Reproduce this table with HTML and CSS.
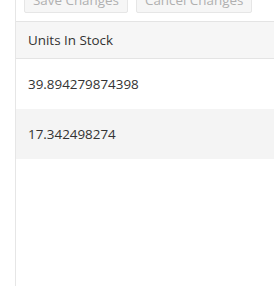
FILE: index.html
```html
<!DOCTYPE html>
<html>
<head>
    <title>Products</title>
    <link rel="stylesheet" href="styles.css">
</head>
<body>
    <div class="grid">
        <div class="grid-toolbar">
            <button class="grid-button" disabled>Save Changes</button>
            <button class="grid-button" disabled>Cancel Changes</button>
        </div>
        <div class="grid-header">
            <div class="header-cell">Units In Stock</div>
        </div>
        <div class="grid-content">
            <div class="grid-row">
                <div class="cell">39.894279874398</div>
            </div>
            <div class="grid-row alt">
                <div class="cell">17.342498274</div>
            </div>
        </div>
    </div>
</body>
</html>
```

FILE: styles.css
```css
body {
    margin: 0;
    padding: 0 0 0 15px;
    background-color: #fff;
    color: #424242;
    font-family: "Open Sans", "Noto Sans", sans-serif;
    font-size: 13.4px;
    overflow: hidden;
}

.grid {
    margin-top: -26px;
    height: calc(100vh + 26px);
    box-sizing: border-box;
    border-left: 1px solid #e6e6e6;
    display: flex;
    flex-direction: column;
}

.grid-toolbar {
    display: flex;
    gap: 8px;
    padding: 8px;
    border-bottom: 1px solid #e4e4e4;
}

.grid-button {
    height: 31px;
    padding: 6px 8px 2px;
    background-color: #f6f6f6;
    border: 1px solid #e6e6e6;
    border-radius: 2px;
    color: #b0b0b0;
    font-family: inherit;
    font-size: 13.4px;
}

.grid-header {
    background-color: #f6f6f6;
    border-bottom: 1px solid #e4e4e4;
}

.header-cell {
    height: 36px;
    padding: 0 12px;
    display: flex;
    align-items: center;
    color: #333;
}

.grid-row {
    height: 50px;
    display: flex;
    align-items: center;
}

.grid-row.alt {
    background-color: #f4f4f4;
}

.cell {
    padding: 0 12px;
    color: #333;
}
```
